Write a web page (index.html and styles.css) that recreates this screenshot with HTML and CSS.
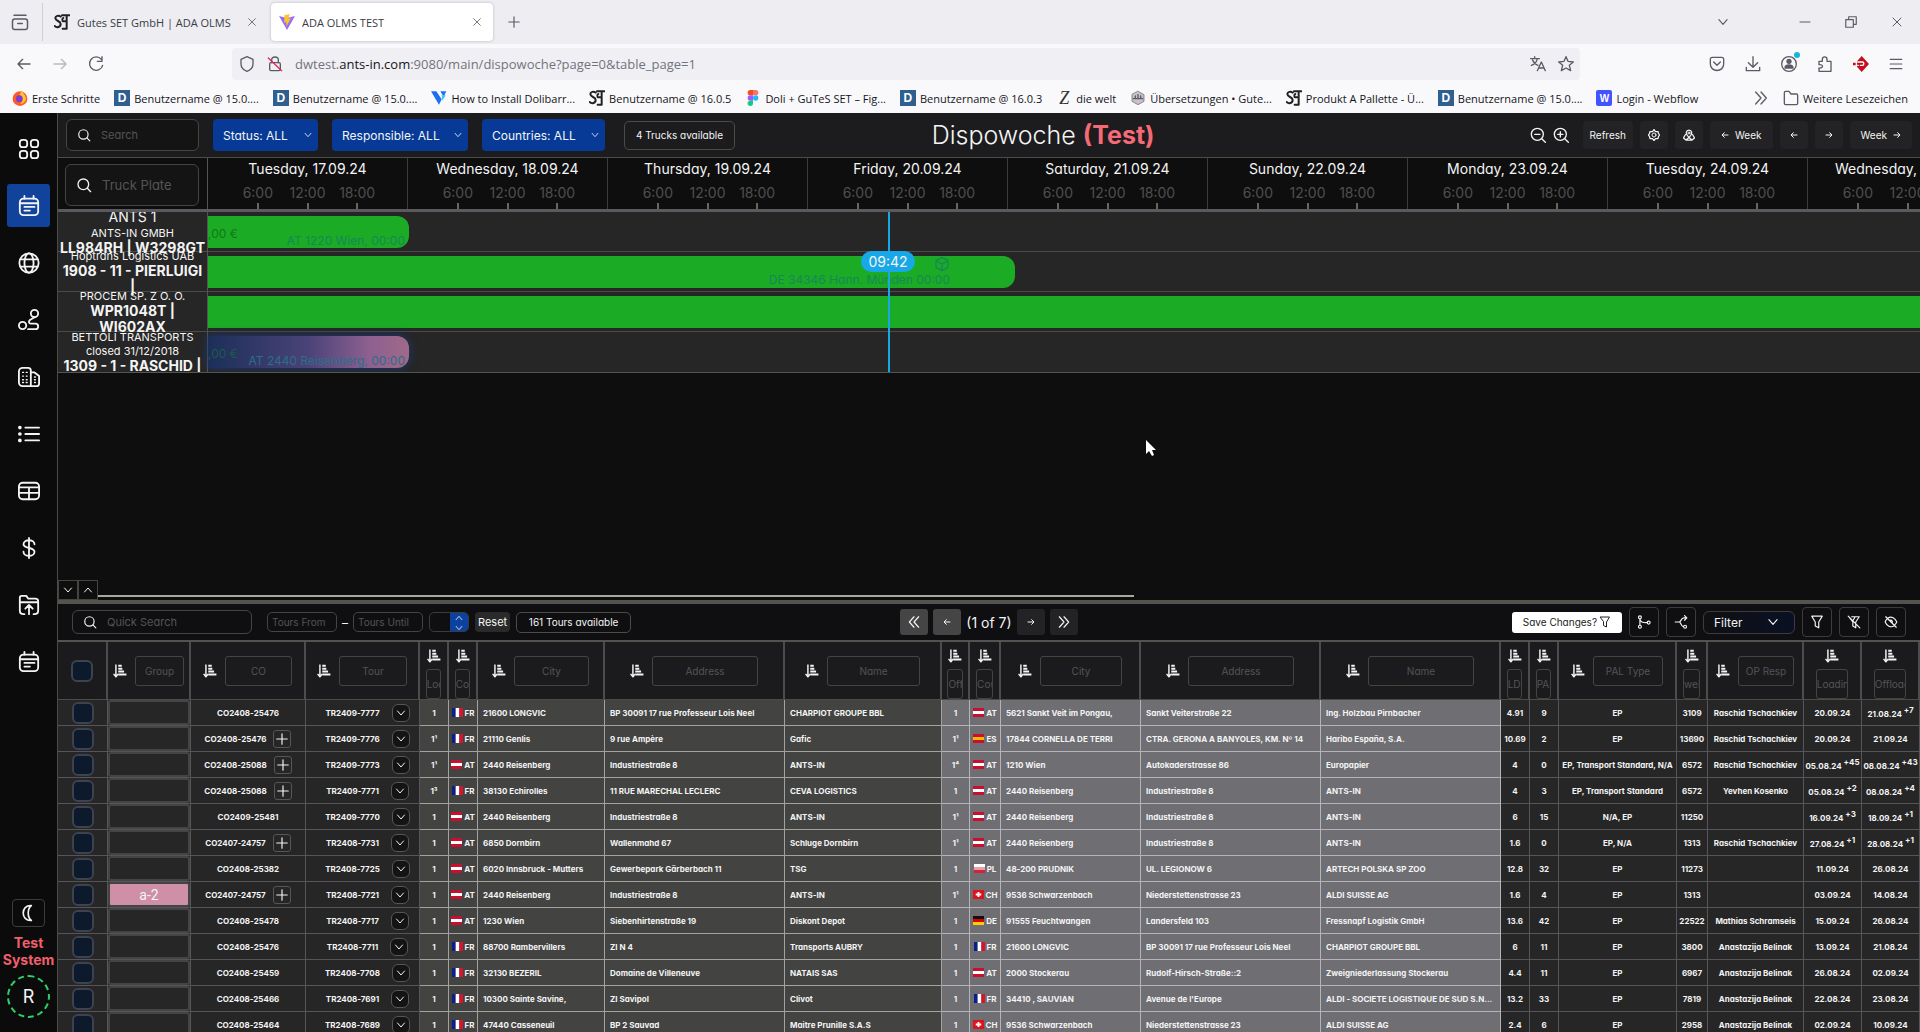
FILE: index.html
```html
<!DOCTYPE html>
<html lang="de">
<head>
<meta charset="utf-8">
<title>ADA OLMS TEST</title>
<link rel="stylesheet" href="styles.css">
</head>
<body>
<svg class="sprite" aria-hidden="true">
  <symbol id="i-search" viewBox="0 0 24 24"><circle cx="11" cy="11" r="8"/><path d="M17 17l5 5"/></symbol>
  <symbol id="i-zoomout" viewBox="0 0 24 24"><circle cx="11" cy="11" r="9"/><path d="M18 18l5 5M7 11h8"/></symbol>
  <symbol id="i-zoomin" viewBox="0 0 24 24"><circle cx="11" cy="11" r="9"/><path d="M18 18l5 5M7 11h8M11 7v8"/></symbol>
  <symbol id="i-down" viewBox="0 0 24 24"><path d="M5 8l7 8 7-8"/></symbol>
  <symbol id="i-up" viewBox="0 0 24 24"><path d="M5 16l7-8 7 8"/></symbol>
  <symbol id="i-left" viewBox="0 0 24 24"><path d="M21 12H4M10 5l-7 7 7 7"/></symbol>
  <symbol id="i-right" viewBox="0 0 24 24"><path d="M3 12h17M14 5l7 7-7 7"/></symbol>
  <symbol id="i-first" viewBox="0 0 24 24"><path d="M12 3l-8 9 8 9M20 3l-8 9 8 9"/></symbol>
  <symbol id="i-last" viewBox="0 0 24 24"><path d="M4 3l8 9-8 9M12 3l8 9-8 9"/></symbol>
  <symbol id="i-plus" viewBox="0 0 24 24"><path d="M12 3v18M3 12h18"/></symbol>
  <symbol id="i-close" viewBox="0 0 24 24"><path d="M4 4l16 16M20 4L4 20"/></symbol>
  <symbol id="i-grid" viewBox="0 0 24 24"><rect x="2" y="2" width="8" height="8" rx="3"/><rect x="14" y="2" width="8" height="8" rx="3"/><rect x="2" y="14" width="8" height="8" rx="3"/><rect x="14" y="14" width="8" height="8" rx="3"/></symbol>
  <symbol id="i-cal" viewBox="0 0 24 24"><rect x="2" y="4" width="20" height="18" rx="4"/><path d="M2 9h20M7 1v3M17 1v3M7 13h11M7 17h6"/></symbol>
  <symbol id="i-globe" viewBox="0 0 24 24"><circle cx="12" cy="12" r="10.500"/><ellipse cx="12" cy="12" rx="5" ry="10.500"/><path d="M3 8h18M3 16h18"/></symbol>
  <symbol id="i-route" viewBox="0 0 24 24"><circle cx="18" cy="5" r="4"/><circle cx="5" cy="18" r="4"/><path d="M18 9l-5 3c-2 2-1 4 1 4h5c4 0 4 6 0 6H11"/></symbol>
  <symbol id="i-building" viewBox="0 0 24 24"><path d="M14 22H5a4 4 0 0 1-4-4V6a4 4 0 0 1 4-4h6a3 3 0 0 1 3 3zM14 7h4l5 4v8a3 3 0 0 1-3 3h-6"/><path stroke-width="1.500" d="M5 7h1M9 7h1M5 11h1M9 11h1M5 15h1M9 15h1M5 18h1M9 18h1M18 12h1M18 15h1M18 18h1"/></symbol>
  <symbol id="i-list" viewBox="0 0 24 24"><path d="M8 5h15M8 12h15M8 19h15"/><path stroke-width="4" d="M2 5h.1M2 12h.1M2 19h.1"/></symbol>
  <symbol id="i-table" viewBox="0 0 24 24"><rect x="1" y="3" width="22" height="18" rx="4"/><path d="M1 8h22M1 14h22M12 8v13"/></symbol>
  <symbol id="i-dollar" viewBox="0 0 24 24"><path d="M12 1v22M18 8c0-6-12-6-12 0 0 5 12 3 12 8 0 6-12 6-12 0"/></symbol>
  <symbol id="i-folderup" viewBox="0 0 24 24"><path d="M7 22H6c-3 0-4-1-4-4V4c0-2 1-2 2-2h5l2 3h8c2 0 3 1 3 3v10c0 3-2 4-4 4h-1M2 9h20M12 22V13M8 16l4-4 4 4"/></symbol>
  <symbol id="i-moon" viewBox="0 0 24 24"><path d="M16 3C3 2 3 22 16 21c-5-4-5-14 0-18z"/></symbol>
  <symbol id="i-gear" viewBox="0 0 24 24"><path stroke-width="2.500" d="M12 1l3 4h5l1 4 2 3-2 3-1 4h-5l-3 4-3-4H4l-1-4-2-3 2-3 1-4h5z"/><circle cx="12" cy="12" r="4"/></symbol>
  <symbol id="i-mappin" viewBox="0 0 24 24"><path stroke-width="2.500" d="M12 17c-9-9-5-15 0-15s9 6 0 15zM5 11l-4 7 5 4h12l5-4-4-7M6 22l6-5 6 5"/><circle cx="12" cy="8" r="2"/></symbol>
  <symbol id="i-funnel" viewBox="0 0 24 24"><path d="M3 2h18l-6 10v10l-6-3v-7z"/></symbol>
  <symbol id="i-funneloff" viewBox="0 0 24 24"><path d="M8 3h13l-6 9v10l-5-3v-7L3 3M2 2l20 20M14 3l-4 7"/></symbol>
  <symbol id="i-eyeoff" viewBox="0 0 24 24"><path d="M7 5c6-4 12 1 15 7-1 2-2 4-4 5M5 7c-2 2-3 4-3 5 3 7 9 10 15 7M3 3l18 18M10 9c4-1 5 2 4 5"/></symbol>
  <symbol id="i-merge" viewBox="0 0 24 24"><circle cx="5" cy="4" r="2.500"/><circle cx="5" cy="20" r="2.500"/><circle cx="20" cy="13" r="2.500"/><path d="M5 7v10M5 7c1 5 4 6 12 6"/></symbol>
  <symbol id="i-split" viewBox="0 0 24 24"><circle cx="19" cy="20" r="2.500"/><path d="M2 12h7c3 0 3-7 8-7h4M18 1l4 4-4 4M9 12c3 0 3 8 7 8"/></symbol>
  <symbol id="i-sort" viewBox="0 0 24 24"><g stroke-linecap="butt"><path stroke-width="2.500" d="M5 1v20M1 17l4 5 4-5"/><path stroke-width="3.500" d="M9 3h6M9 8h7M9 13h10M9 18h14"/></g></symbol>
  <symbol id="i-box" viewBox="0 0 24 24"><path d="M12 2l9 5v10l-9 5-9-5V7zM3 7l9 5 9-5M12 12v10"/></symbol>
  <symbol id="i-archive" viewBox="0 0 24 24"><rect x="2" y="8" width="20" height="14" rx="3"/><path d="M4 3h16M9 14h6"/></symbol>
  <symbol id="i-reload" viewBox="0 0 24 24"><path d="M20 5a10 10 0 1 0 2 9M21 1v7h-7"/></symbol>
  <symbol id="i-shield" viewBox="0 0 24 24"><path d="M12 1l9 4v7c0 5-4 9-9 11-5-2-9-6-9-11V5z"/></symbol>
  <symbol id="i-lockoff" viewBox="0 0 24 24"><rect x="4" y="10" width="16" height="12" rx="2"/><path d="M7 10V6c0-6 10-6 10 0v4"/><path stroke="#e22850" d="M2 3l20 19"/></symbol>
  <symbol id="i-translate" viewBox="0 0 24 24"><path d="M1 4h13M7 1v3M11 4c-1 5-5 9-9 10M4 6c1 3 5 7 8 8M11 22l6-13 6 13M13 18h8"/></symbol>
  <symbol id="i-star" viewBox="0 0 24 24"><path d="M12 1l3 7 8 1-6 5 2 8-7-4-7 4 2-8-6-5 8-1z"/></symbol>
  <symbol id="i-pocket" viewBox="0 0 24 24"><path d="M2 5c0-2 1-3 3-3h14c2 0 3 1 3 3v7c0 13-20 13-20 0zM7 9l5 5 5-5"/></symbol>
  <symbol id="i-download" viewBox="0 0 24 24"><path d="M12 1v15M5 10l7 7 7-7M2 17v5h20v-5"/></symbol>
  <symbol id="i-user" viewBox="0 0 24 24"><circle cx="12" cy="12" r="11"/><circle cx="12" cy="8" r="3" fill="currentColor"/><path fill="currentColor" d="M6 18c0-6 12-6 12 0z"/></symbol>
  <symbol id="i-puzzle" viewBox="0 0 24 24"><path d="M3 8h5V5c0-5 7-5 7 0v3h6v15H3v-5c7 1 7-6 0-5z"/></symbol>
  <symbol id="i-menu" viewBox="0 0 24 24"><path d="M2 4h20M2 12h20M2 20h20"/></symbol>
  <symbol id="i-folder" viewBox="0 0 24 24"><path d="M2 20V4c0-1 1-2 2-2h5l3 4h8c1 0 2 1 2 2v12c0 1-1 2-2 2H4c-1 0-2-1-2-2z"/></symbol>
  <symbol id="i-restore" viewBox="0 0 24 24"><path d="M3 8h13v13H3zM8 8V3h13v13h-5"/></symbol>
  <symbol id="i-min" viewBox="0 0 24 24"><path d="M2 12h20"/></symbol>
  <symbol id="i-set" viewBox="0 0 24 24"><path stroke-width="3" d="M10 4c-3-3-8-1-8 2 0 5 8 4 8 9 0 5-6 6-9 3M12 2h11M19 2v20h-6M19 11h-5c-2 0-2-5 0-5"/></symbol>
  <symbol id="i-vite" viewBox="0 0 24 24"><path stroke="none" fill="#9a6cf0" d="M0 3l12 21L24 3 12 6z"/><path stroke="none" fill="#fcc42c" d="M16 0L8 2v11l3-1v7l7-13-4 1z"/></symbol>
  <symbol id="i-fox" viewBox="0 0 24 24"><circle cx="12" cy="13" r="11" stroke="none" fill="#ff5a2a"/><path stroke="none" fill="#ffc52e" d="M15 0c0 5 5 6 6 13-1 6-6 8-9 8 6-4 4-12-1-13z"/><circle cx="11" cy="13" r="5" stroke="none" fill="#7a40d0"/></symbol>
  <symbol id="i-vultr" viewBox="0 0 24 24"><path stroke="none" fill="#1d6ff2" d="M0 2h8l8 12-4 8zM14 2h9l-4 8z"/><path stroke="none" fill="#3cc6f0" d="M16 8l6 0-5 8z"/></symbol>
  <symbol id="i-figma" viewBox="0 0 24 24"><g stroke="none"><path fill="#f24e1e" d="M12 0H8a4 4 0 0 0 0 8h4z"/><path fill="#ff7262" d="M12 0h4a4 4 0 0 1 0 8h-4z"/><path fill="#a259ff" d="M12 8H8a4 4 0 0 0 0 8h4z"/><circle fill="#1abcfe" cx="16" cy="12" r="4"/><path fill="#0acf83" d="M12 16H8a4 4 0 1 0 4 4z"/></g></symbol>
  <symbol id="i-hex" viewBox="0 0 24 24"><path fill="#c9c0c8" stroke-width="1" d="M12 2l9 5v10l-9 5-9-5V7z"/><path d="M5 13h14M8 9v4M12 7v6M16 9v4"/></symbol>
  <symbol id="i-ext" viewBox="0 0 24 24"><path stroke="none" fill="#c4101c" d="M13 0l11 12-11 12-7-8V8zM0 10h4v4H0z"/><path stroke="#fff" d="M7 9h7c3 0 3 5 0 5h-3M7 14h1"/></symbol>
</svg>

<div class="window">
  <header class="browser">
    <div class="tabs">
      <svg class="ic s18 archive"><use href="#i-archive"/></svg>
      <div class="tab"><svg class="ic s16 dark"><use href="#i-set"/></svg><span>Gutes SET GmbH | ADA OLMS</span><button aria-label="Tab schließen"><svg class="ic s10"><use href="#i-close"/></svg></button></div>
      <div class="tab active"><svg class="ic s16"><use href="#i-vite"/></svg><span>ADA OLMS TEST</span><button aria-label="Tab schließen"><svg class="ic s10"><use href="#i-close"/></svg></button></div>
      <button class="newtab" aria-label="Neuer Tab"><svg class="ic s14"><use href="#i-plus"/></svg></button>
      <div class="winctl">
        <svg class="ic s14 alltabs"><use href="#i-down"/></svg>
        <button aria-label="Minimieren"><svg class="ic s12"><use href="#i-min"/></svg></button>
        <button aria-label="Wiederherstellen"><svg class="ic s14"><use href="#i-restore"/></svg></button>
        <button aria-label="Schließen"><svg class="ic s12"><use href="#i-close"/></svg></button>
      </div>
    </div>
    <div class="navbar">
      <div class="navbtns">
        <button aria-label="Zurück"><svg class="ic s16"><use href="#i-left"/></svg></button>
        <button aria-label="Vor" class="dim"><svg class="ic s16"><use href="#i-right"/></svg></button>
        <button aria-label="Neu laden"><svg class="ic s16"><use href="#i-reload"/></svg></button>
      </div>
      <div class="url">
        <svg class="ic s16"><use href="#i-shield"/></svg>
        <svg class="ic s16"><use href="#i-lockoff"/></svg>
        <span class="addr">dwtest.<b>ants-in.com</b>:9080/main/dispowoche?page=0&amp;table_page=1</span>
        <svg class="ic s16"><use href="#i-translate"/></svg>
        <svg class="ic s16"><use href="#i-star"/></svg>
      </div>
      <div class="exts">
        <svg class="ic s16"><use href="#i-pocket"/></svg>
        <svg class="ic s16"><use href="#i-download"/></svg>
        <span class="account"><svg class="ic s16"><use href="#i-user"/></svg></span>
        <svg class="ic s16"><use href="#i-puzzle"/></svg>
        <svg class="ic s16"><use href="#i-ext"/></svg>
        <svg class="ic s14"><use href="#i-menu"/></svg>
      </div>
    </div>
    <nav class="marks" id="marks"></nav>
  </header>

  <div class="app">
    <aside class="side">
      <nav class="sidenav" id="sidenav"></nav>
      <div class="sidefoot">
        <button class="moon" aria-label="Dark mode"><svg class="ic s20"><use href="#i-moon"/></svg></button>
        <strong>Test<br>System</strong>
        <a class="avatar" href="#">R</a>
      </div>
    </aside>

    <main class="main">
      <div class="topbar">
        <div class="filters">
          <label class="field search"><svg class="ic s14"><use href="#i-search"/></svg><input placeholder="Search" aria-label="Search"></label>
          <label class="blue status"><select aria-label="Status"><option>Status: ALL</option></select><svg class="ic s10"><use href="#i-down"/></svg></label>
          <label class="blue resp"><select aria-label="Responsible"><option>Responsible: ALL</option></select><svg class="ic s10"><use href="#i-down"/></svg></label>
          <label class="blue countries"><select aria-label="Countries"><option>Countries: ALL</option></select><svg class="ic s10"><use href="#i-down"/></svg></label>
          <span class="pill trucks">4 Trucks available</span>
        </div>
        <h1>Dispowoche <b>(Test)</b></h1>
        <div class="actions">
          <button class="bare" aria-label="Zoom out"><svg class="ic s16"><use href="#i-zoomout"/></svg></button>
          <button class="bare" aria-label="Zoom in"><svg class="ic s16"><use href="#i-zoomin"/></svg></button>
          <button class="act">Refresh</button>
          <button class="act sq" aria-label="Settings"><svg class="ic s12"><use href="#i-gear"/></svg></button>
          <button class="act sq" aria-label="Map"><svg class="ic s12"><use href="#i-mappin"/></svg></button>
          <button class="act week"><svg class="ic s8"><use href="#i-left"/></svg>Week</button>
          <button class="act sq" aria-label="Previous day"><svg class="ic s8"><use href="#i-left"/></svg></button>
          <button class="act sq" aria-label="Next day"><svg class="ic s8"><use href="#i-right"/></svg></button>
          <button class="act week">Week<svg class="ic s8"><use href="#i-right"/></svg></button>
        </div>
      </div>

      <section class="plan">
        <div class="planhead">
          <div class="plate"><label class="field"><svg class="ic s16"><use href="#i-search"/></svg><input placeholder="Truck Plate" aria-label="Truck Plate"></label></div>
          <div class="days" id="days"></div>
        </div>
        <div class="planbody">
          <div class="trucks-col">
            <div class="truck"><span class="mid">ANTS 1</span><span>ANTS-IN GMBH</span><b>LL984RH | W3298GT</b></div>
            <div class="truck"><span>Hoptrans Logistics UAB</span><b>1908 - 11 - PIERLUIGI<br>|</b></div>
            <div class="truck"><span>PROCEM SP. Z O. O.</span><b>WPR1048T |<br>WI602AX</b></div>
            <div class="truck"><span>BETTOLI TRANSPORTS<br>closed 31/12/2018</span><b>1309 - 1 - RASCHID |</b></div>
          </div>
          <div class="lanes">
            <div class="lane"><div class="bar day"><span class="price">,00 €</span><span class="dest">AT 1220 Wien, 00:00</span></div></div>
            <div class="lane"><div class="bar mid4"><svg class="ic s16"><use href="#i-box"/></svg><span class="dest">DE 34346 Hann. Münden 00:00</span></div></div>
            <div class="lane"><div class="bar full"></div></div>
            <div class="lane"><div class="bar day grad"><span class="price">,00 €</span><span class="dest">AT 2440 Reisenberg, 00:00</span></div></div>
            <div class="now"><time>09:42</time></div>
          </div>
        </div>
        <div class="planfoot">
          <button aria-label="Collapse"><svg class="ic s12"><use href="#i-down"/></svg></button>
          <button aria-label="Expand"><svg class="ic s12"><use href="#i-up"/></svg></button>
          <div class="scroll"></div>
        </div>
      </section>

      <section class="tours">
        <div class="toolbar">
          <div class="group">
            <label class="field quick"><svg class="ic s14"><use href="#i-search"/></svg><input placeholder="Quick Search" aria-label="Quick Search"></label>
            <div class="range"><input placeholder="Tours From" aria-label="Tours From"><span>–</span><input placeholder="Tours Until" aria-label="Tours Until"></div>
            <div class="spin"><input aria-label="Days"><span><svg class="ic s10"><use href="#i-up"/></svg><svg class="ic s10"><use href="#i-down"/></svg></span></div>
            <button class="reset">Reset</button>
            <span class="pill avail">161 Tours available</span>
          </div>
          <div class="pager">
            <button class="off" aria-label="First page"><svg class="ic s14"><use href="#i-first"/></svg></button>
            <button class="off" aria-label="Previous page"><svg class="ic s8"><use href="#i-left"/></svg></button>
            <span>(1 of 7)</span>
            <button aria-label="Next page"><svg class="ic s8"><use href="#i-right"/></svg></button>
            <button aria-label="Last page"><svg class="ic s14"><use href="#i-last"/></svg></button>
          </div>
          <div class="tools">
            <button class="save">Save Changes?<svg class="ic s12"><use href="#i-funnel"/></svg></button>
            <button class="tool" aria-label="Merge"><svg class="ic s14"><use href="#i-merge"/></svg></button>
            <button class="tool" aria-label="Split"><svg class="ic s14"><use href="#i-split"/></svg></button>
            <label class="filter"><select aria-label="Filter"><option>Filter</option></select><svg class="ic s14"><use href="#i-down"/></svg></label>
            <button class="tool" aria-label="Filter rows"><svg class="ic s14"><use href="#i-funnel"/></svg></button>
            <button class="tool" aria-label="Clear filter"><svg class="ic s14"><use href="#i-funneloff"/></svg></button>
            <button class="tool" aria-label="Hide columns"><svg class="ic s14"><use href="#i-eyeoff"/></svg></button>
          </div>
        </div>
        <div class="tablewrap">
          <table>
            <colgroup id="cols"></colgroup>
            <thead><tr id="heads"></tr></thead>
            <tbody id="rows"></tbody>
          </table>
        </div>
      </section>
    </main>
  </div>
</div>
<svg class="pointer" viewBox="0 0 12 18" aria-hidden="true"><path d="M1 1v14l3-3 3 5 2-1-2-5h4z" fill="#fff"/></svg>
<script src="app.js"></script>
</body>
</html>
```
FILE: styles.css
```css
* { box-sizing: border-box; }
body {
  margin: 0;
  background: #0e0e0f;
  color: #f4f4f4;
  font-family: Inter, "Liberation Sans", sans-serif;
  font-feature-settings: "cv11";
  font-size: 12px;
}
button, input, select { font: inherit; font-feature-settings: inherit; color: inherit; margin: 0; padding: 0; border: 0; background: none; min-width: 0; }
button { display: flex; align-items: center; justify-content: center; }
select { appearance: none; outline: none; }
input { outline: none; }
input::placeholder { color: #545454; opacity: 1; }
a { color: inherit; text-decoration: none; }
.sprite { position: absolute; width: 0; height: 0; }
.ic { flex: none; fill: none; stroke: currentColor; stroke-width: 2; stroke-linecap: round; stroke-linejoin: round; }
.s8 { width: 8px; height: 8px; stroke-width: 3; }
.s10 { width: 10px; height: 10px; }
.s12 { width: 12px; height: 12px; }
.s14 { width: 14px; height: 14px; }
.s16 { width: 16px; height: 16px; }
.s18 { width: 18px; height: 18px; }
.s20 { width: 20px; height: 20px; }
.s24 { width: 22px; height: 22px; }
.window { display: flex; flex-direction: column; height: 100vh; overflow: hidden; }

/* browser chrome */
.browser { flex: none; font-family: "Open Sans", "Noto Sans", sans-serif; font-size: 11px; color: #15141a; background: #f9f9fb; }
.browser .ic { color: #5b5b66; }
.browser .dark { color: #222; }
.tabs { display: flex; align-items: center; height: 44px; background: #ededf2; }
.archive { margin: 0 13px 0 11px; }
.tab { display: flex; align-items: center; gap: 7px; height: 38px; padding: 0 14px 0 11px; width: 229px; border-left: 1px solid #cfcfd8; color: #3b3b44; }
.tab span { flex: 1; white-space: nowrap; overflow: hidden; }
.tab.active { width: 222px; padding: 0 11px 0 8px; background: #fff; border: 0; border-radius: 4px; box-shadow: 0 0 3px #b4b4bc; }
.newtab { margin-left: 14px; }
.winctl { margin-left: auto; display: flex; align-items: center; gap: 33px; padding-right: 17px; }
.alltabs { margin-right: 36px; }
.navbar { display: flex; align-items: center; height: 39px; }
.navbtns { display: flex; gap: 20px; width: 232px; padding-left: 16px; }
.dim { opacity: .4; }
.url { flex: 1; display: flex; align-items: center; gap: 12px; height: 32px; padding: 0 6px 0 7px; background: #f0f0f4; border-radius: 4px; }
.addr { flex: 1; font-size: 13px; color: #73737c; }
.addr b { font-weight: 400; color: #15141a; }
.exts { display: flex; align-items: center; justify-content: flex-end; gap: 20px; width: 340px; padding-right: 17px; }
.account { position: relative; display: flex; }
.account::after { content: ""; position: absolute; top: -4px; right: -3px; width: 6px; height: 6px; border-radius: 50%; background: #18b4e0; }
.marks { display: flex; align-items: center; gap: 14px; height: 30px; padding: 0 12px; }
.marks a { display: flex; align-items: center; gap: 4px; white-space: nowrap; }
.marks .more { margin-left: auto; }
.fav { display: flex; align-items: center; justify-content: center; width: 16px; height: 16px; font: 700 12px "Liberation Sans", sans-serif; color: #fff; }
.fav.d { background: #2f5f8f; }
.fav.w { background: #4353ff; font-size: 10px; border-radius: 2px; }
.fav.z { color: #333; font: italic 18px "Liberation Serif", serif; }

/* sidebar */
.app { flex: 1; display: flex; min-height: 0; }
.side { flex: none; display: flex; flex-direction: column; justify-content: space-between; align-items: center; width: 58px; padding: 14px 0; background: #0b0b0c; border-right: 1px solid #4c4c46; }
.sidenav { display: flex; flex-direction: column; gap: 14px; }
.sidenav a { display: flex; align-items: center; justify-content: center; width: 43px; height: 43px; border-radius: 3px; }
.sidenav a.on { background: #12439c; }
.sidefoot { display: flex; flex-direction: column; align-items: center; gap: 7px; text-align: center; }
.sidefoot strong { color: #f0606c; font-size: 14px; line-height: 17px; }
.moon { width: 33px; height: 28px; border: 1px solid #3c3c3c; border-radius: 4px; }
.avatar { display: flex; align-items: center; justify-content: center; width: 43px; height: 43px; border: 2px dashed #2fd068; border-radius: 50%; font-size: 18px; }

/* top bar */
.main { flex: 1; min-width: 0; display: flex; flex-direction: column; }
.topbar { flex: none; display: grid; grid-template-columns: 8fr auto 7fr; align-items: center; height: 45px; padding: 0 8px; background: #1c1c1f; border-bottom: 1px solid #4c4c46; }
.filters { display: flex; align-items: center; gap: 14px; }
.field { display: flex; align-items: center; gap: 10px; height: 32px; padding: 0 10px; border: 1px solid #45453f; border-radius: 6px; background: #141415; }
.field input { flex: 1; width: 20px; }
.search { width: 133px; font-size: 11px; }
.blue { display: flex; align-items: center; height: 32px; padding: 0 5px 0 10px; background: #063a96; border-radius: 4px; }
.blue select { flex: 1; }
.status { width: 105px; }
.resp { width: 136px; }
.countries { width: 123px; }
.pill { display: flex; align-items: center; justify-content: center; border: 1px solid #4c4c46; border-radius: 5px; white-space: nowrap; }
.trucks { width: 111px; height: 29px; margin-left: 5px; font-size: 10px; }
h1 { margin: 0; font-size: 25px; font-weight: 300; white-space: nowrap; }
h1 b { color: #f56a76; font-weight: 700; }
.actions { display: flex; align-items: center; justify-content: flex-end; gap: 7px; }
.act { gap: 6px; height: 28px; padding: 0 7px; font-size: 10px; background: #232325; border-radius: 4px; }
.act.sq { width: 28px; padding: 0; }
.act.week { padding: 0 11px; }
.bare + .act { margin-left: 7px; }

/* planner */
.plan { flex: none; display: flex; flex-direction: column; height: 446px; border-bottom: 4px solid #53534f; background: #0e0e0f; }
.planhead { display: flex; height: 54px; border-bottom: 3px solid #5a5a5e; }
.plate { flex: none; width: 150px; padding: 6px 8px 2px 7px; border-right: 1px solid #55554f; }
.plate .field { height: 42px; font-size: 13px; }
.days { flex: 1; display: flex; overflow: hidden; }
.day-head { flex: none; width: 200px; border-right: 1px solid #3c3c3c; display: flex; flex-direction: column; justify-content: space-between; text-align: center; font-size: 14px; line-height: 22px; white-space: nowrap; }
.hours { display: flex; padding: 0 25px; color: #4e4e4e; }
.hours span { flex: 1; display: flex; flex-direction: column; align-items: center; line-height: 18px; }
.hours span::after { content: ""; width: 2px; height: 6px; margin-top: 1px; background: #66665f; }
.planbody { display: flex; overflow: hidden; background: #262626; border-bottom: 1px solid #55554f; }
.trucks-col { flex: none; width: 150px; border-right: 1px solid #55554f; }
.truck { display: flex; flex-direction: column; align-items: center; justify-content: center; height: 40px; text-align: center; font-size: 11px; line-height: 14px; white-space: nowrap; border-bottom: 1px solid #4c4c46; }
.truck b { font-size: 14px; line-height: 16px; }
.truck .mid { font-size: 14px; line-height: 18px; }
.truck:last-child, .lane:nth-child(4) { border-bottom: 0; }
.lanes { position: relative; flex: 1; min-width: 0; }
.lane { height: 40px; padding: 4px 0; border-bottom: 1px solid #4c4c46; }
.bar { position: relative; height: 32px; background: #1cab24; border-radius: 0 12px 12px 0; }
.bar.day { width: 201px; }
.bar.mid4 { width: 807px; padding: 0 65px 0 0; text-align: right; color: #17875a; }
.bar.mid4 .ic { display: block; margin-left: auto; }
.bar.full { border-radius: 0; }
.bar .price { position: absolute; left: 0; top: 10px; color: #127a18; }
.bar .dest { display: block; color: #17875a; line-height: 16px; text-align: right; }
.bar.day .dest { padding: 17px 4px 0 0; }
.bar.grad { background: linear-gradient(90deg, #1c2f58, #4a4378 50%, #8d6090 80%, #a06a88); box-shadow: 0 0 10px #1c3a78; }
.bar.grad .price { color: #1c5a4c; }
.bar.grad .dest { color: #2c6e8c; }
.now { position: absolute; left: 680px; top: 0; bottom: 0; width: 2px; background: #18a8e8; }
.now time { position: absolute; left: -27px; top: 39px; width: 54px; border-radius: 11px; background: #18a8e8; font-size: 14px; line-height: 21px; text-align: center; }
.planfoot { display: flex; align-items: flex-end; height: 20px; margin-top: auto; }
.planfoot button { width: 20px; height: 20px; border: 1px solid #45453f; }
.scroll { width: 1036px; height: 2px; margin-bottom: 3px; background: #a8a8a0; }

/* tours */
.tours { flex: 1; min-height: 0; display: flex; flex-direction: column; }
.toolbar { flex: none; display: grid; grid-template-columns: 1fr auto 1fr; align-items: center; height: 38px; padding: 0 14px; border-bottom: 2px solid #53534f; background: #0f0f11; }
.group { display: flex; align-items: center; gap: 6px; }
.quick { width: 180px; height: 24px; background: none; font-size: 11px; }
.range { display: flex; align-items: center; gap: 5px; margin-left: 9px; }
.range input { width: 70px; height: 20px; padding: 0 4px; border: 1px solid #45453f; border-radius: 5px; font-size: 10px; }
.spin { display: flex; width: 40px; height: 20px; border: 1px solid #3c3c3c; border-radius: 5px; overflow: hidden; }
.spin input { flex: 1; }
.spin span { display: flex; flex-direction: column; width: 18px; align-items: center; background: #0b419f; }
.reset { height: 20px; padding: 0 3px; font-size: 11px; background: #2a2a2a; border-radius: 4px; }
.avail { width: 115px; height: 21px; font-size: 10px; }
.pager { display: flex; align-items: center; gap: 5px; font-size: 14px; }
.pager button { width: 28px; height: 26px; border-radius: 3px; background: #232325; }
.pager .off { background: #454545; }
.tools { display: flex; align-items: center; justify-content: flex-end; gap: 7px; }
.save { gap: 2px; height: 21px; padding: 0 11px; font-size: 10px; background: #fff; color: #222; border-radius: 3px; }
.tool { width: 30px; height: 30px; border: 1px solid #3c3c3c; border-radius: 4px; }
.filter { display: flex; align-items: center; width: 92px; height: 23px; padding: 0 14px 0 10px; border: 1px solid #3c3c3c; border-radius: 6px; background: linear-gradient(90deg, #101012, #0a1024); }
.filter select { flex: 1; }
.tablewrap { flex: 1; min-height: 0; overflow: hidden; }
table { width: 100%; table-layout: fixed; border-collapse: separate; border-spacing: 0; font-size: 8px; font-weight: 700; line-height: 12px; }
th { height: 58px; padding: 0; background: #1b1b1e; border-right: 2px solid #4c4c4c; border-bottom: 1px solid #4c4c46; font-weight: 400; }
td { height: 26px; padding: 0; background: #262626; border-right: 1px solid #55555a; border-bottom: 1px solid #55555a; text-align: center; white-space: nowrap; overflow: hidden; }
th > div { display: flex; align-items: center; justify-content: center; gap: 8px; }
th .text { width: 60%; height: 30px; border: 1px solid #45453f; border-radius: 3px; font-size: 10px; text-align: center; }
th .narrow { flex-direction: column; gap: 6px; padding-top: 6px; }
th .narrow .text { text-align: left; width: 58%; }
td.load { background: #434342; border-color: #a2a2a0; }
td.unload { background: #6e6e73; border-color: #b4b4b8; }
td.l { padding-left: 5px; text-align: left; }
td > div { display: flex; align-items: center; justify-content: center; gap: 7px; }
td .cc { gap: 2px; }
td .tr { gap: 12px; padding-left: 10px; }
td sup { font-size: 8px; line-height: 8px; }
td button { width: 18px; height: 18px; border: 1px solid #55555a; border-radius: 3px; }
.tr button { border-radius: 6px; background: #141415; }
input[type=checkbox] { appearance: none; display: block; width: 22px; height: 22px; margin: 0 auto; border: 2px solid #3c4250; border-radius: 6px; background: #0d1a2c; }
td .grp { display: block; width: 100%; height: 25px; border: 2px solid #444444; border-radius: 3px; text-align: center; font: 400 14px Roboto, sans-serif; }
.grp.pink { background: #cf8fa6; }
.flag { width: 11px; height: 9px; }
.pointer { position: absolute; left: 1145px; top: 439px; width: 12px; height: 18px; }
```
FILE: app.js
```js
const icon = (name, size) => `<svg class="ic ${size}"><use href="#i-${name}"/></svg>`;

const fav = {
  D: '<span class="fav d">D</span>', W: '<span class="fav w">W</span>', Z: '<span class="fav z">Z</span>',
  fox: icon('fox', 's16'), set: icon('set', 's16 dark'), vultr: icon('vultr', 's16'),
  figma: icon('figma', 's16'), hex: icon('hex', 's16')
};
const marks = [
  ['fox', 'Erste Schritte'], ['D', 'Benutzername @ 15.0....'], ['D', 'Benutzername @ 15.0....'],
  ['vultr', 'How to Install Dolibarr...'], ['set', 'Benutzername @ 16.0.5'], ['figma', 'Doli + GuTeS SET – Fig...'],
  ['D', 'Benutzername @ 16.0.3'], ['Z', 'die welt'], ['hex', 'Übersetzungen • Gute...'],
  ['set', 'Produkt A Pallette - Ü...'], ['D', 'Benutzername @ 15.0....'], ['W', 'Login - Webflow']
];
document.getElementById('marks').innerHTML =
  marks.map(([f, t]) => `<a href="#">${fav[f]}<span>${t}</span></a>`).join('') +
  `<a href="#" class="more" aria-label="Mehr">${icon('last', 's16')}</a><a href="#">${icon('folder', 's16')}<span>Weitere Lesezeichen</span></a>`;

document.getElementById('sidenav').innerHTML =
  ['grid', 'cal', 'globe', 'route', 'building', 'list', 'table', 'dollar', 'folderup', 'cal']
    .map((n, i) => `<a href="#" aria-label="${n}"${i === 1 ? ' class="on"' : ''}>${icon(n, 's24')}</a>`).join('');

document.getElementById('days').innerHTML =
  ['Tuesday, 17', 'Wednesday, 18', 'Thursday, 19', 'Friday, 20', 'Saturday, 21', 'Sunday, 22', 'Monday, 23', 'Tuesday, 24', 'Wednesday, 25']
    .map(d => `<div class="day-head">${d}.09.24<div class="hours"><span>6:00</span><span>12:00</span><span>18:00</span></div></div>`).join('');

// column: width, label, stacked header
const cols = [
  [50, ''], [83, 'Group'], [115, 'CO'], [114, 'Tour'], [29, 'Loading', 1], [29, 'Country', 1],
  [127, 'City'], [180, 'Address'], [157, 'Name'], [28, 'Offloading', 1], [31, 'Country', 1],
  [140, 'City'], [180, 'Address'], [180, 'Name'], [29, 'LDM', 1], [29, 'PAL', 1],
  [118, 'PAL Type'], [31, 'weight', 1], [96, 'OP Resp'], [58, 'Loading', 1], [58, 'Offloading', 1]
];
document.getElementById('cols').innerHTML = cols.map(c => `<col style="width:${c[0]}px">`).join('');
document.getElementById('heads').innerHTML = cols.map(([, t, narrow]) => t
  ? `<th><div${narrow ? ' class="narrow"' : ''}>${icon('sort', 's14')}<input class="text" placeholder="${t}" aria-label="${t}"></div></th>`
  : '<th><input type="checkbox" aria-label="Select all"></th>').join('');

const bands = {
  FR: ['v', '#0b1f8c', '#fff', '#d8142c'], AT: ['h', '#c8102e', '#fff', '#c8102e'], ES: ['h', '#c8102e', '#f5b800', '#c8102e'],
  DE: ['h', '#111', '#d00', '#fc0'], PL: ['h', '#fff', '#e8a0a8', '#d4213d'], CH: ['h', '#e0101c', '#e0101c', '#e0101c']
};
const flag = c => {
  const [dir, ...fill] = bands[c];
  const parts = fill.map((f, i) => dir === 'v'
    ? `<rect x="${i * 4}" width="4" height="9" fill="${f}"/>`
    : `<rect y="${i * 3}" width="12" height="3" fill="${f}"/>`).join('');
  return `<svg class="flag" viewBox="0 0 12 9" preserveAspectRatio="none">${parts}${c === 'CH' ? '<path d="M6 2v5M3 4.500h6" stroke="#fff" stroke-width="2"/>' : ''}</svg>`;
};

// group | CO | plus | tour | load nr, country, city, address, name | unload ... | ldm | pal | type | weight | resp | dates
const rows = `|CO2408-25476||TR2409-7777|1|FR|21600 LONGVIC|BP 30091 17 rue Professeur Lois Neel|CHARPIOT GROUPE BBL|1|AT|5621 Sankt Veit im Pongau,|Sankt Veiterstraße 22|Ing. Holzbau Pirnbacher|4.91|9|EP|3109|Raschid Tschachkiev|20.09.24|21.08.24 +7
|CO2408-25476|+|TR2409-7776|1¹|FR|21110 Genlis|9 rue Ampère|Gafic|1¹|ES|17844 CORNELLA DE TERRI|CTRA. GERONA A BANYOLES, KM. Nº 14|Haribo España, S.A.|10.69|2|EP|13690|Raschid Tschachkiev|20.09.24|21.09.24
|CO2408-25088|+|TR2409-7773|1¹|AT|2440 Reisenberg|Industriestraße 8|ANTS-IN|1⁴|AT|1210 Wien|Autokaderstrasse 86|Europapier|4|0|EP, Transport Standard, N/A|6572|Raschid Tschachkiev|05.08.24 +45|08.08.24 +43
|CO2408-25088|+|TR2409-7771|1³|FR|38130 Echirolles|11 RUE MARECHAL LECLERC|CEVA LOGISTICS|1|AT|2440 Reisenberg|Industriestraße 8|ANTS-IN|4|3|EP, Transport Standard|6572|Yevhen Kosenko|05.08.24 +2|08.08.24 +4
|CO2409-25481||TR2409-7770|1|AT|2440 Reisenberg|Industriestraße 8|ANTS-IN|1¹|AT|2440 Reisenberg|Industriestraße 8|ANTS-IN|6|15|N/A, EP|11250||16.09.24 +3|18.09.24 +1
|CO2407-24757|+|TR2408-7731|1|AT|6850 Dornbirn|Wallenmahd 67|Schluge Dornbirn|1¹|AT|2440 Reisenberg|Industriestraße 8|ANTS-IN|1.6|0|EP, N/A|1313|Raschid Tschachkiev|27.08.24 +1|28.08.24 +1
|CO2408-25382||TR2408-7725|1|AT|6020 Innsbruck - Mutters|Gewerbepark Gärberbach 11|TSG|1|PL|48-200 PRUDNIK|UL. LEGIONOW 6|ARTECH POLSKA SP ZOO|12.8|32|EP|11273||11.09.24|26.08.24
a-2|CO2407-24757|+|TR2408-7721|1|AT|2440 Reisenberg|Industriestraße 8|ANTS-IN|1¹|CH|9536 Schwarzenbach|Niederstettenstrasse 23|ALDI SUISSE AG|1.6|4|EP|1313||03.09.24|14.08.24
|CO2408-25478||TR2408-7717|1|AT|1230 Wien|Siebenhirtenstraße 19|Diskont Depot|1|DE|91555 Feuchtwangen|Landersfeld 103|Fressnapf Logistik GmbH|13.6|42|EP|22522|Mathias Schramseis|15.09.24|26.08.24
|CO2408-25476||TR2408-7711|1|FR|88700 Rambervillers|ZI N 4|Transports AUBRY|1|FR|21600 LONGVIC|BP 30091 17 rue Professeur Lois Neel|CHARPIOT GROUPE BBL|6|11|EP|3800|Anastazija Belinak|13.09.24|21.08.24
|CO2408-25459||TR2408-7708|1|FR|32130 BEZERIL|Domaine de Villeneuve|NATAIS SAS|1|AT|2000 Stockerau|Rudolf-Hirsch-Straße::2|Zweigniederlassung Stockerau|4.4|11|EP|6967|Anastazija Belinak|26.08.24|02.09.24
|CO2408-25466||TR2408-7691|1|FR|10300 Sainte Savine,|ZI Savipol|Clivot|1|FR|34410 , SAUVIAN|Avenue de l'Europe|ALDI - SOCIETE LOGISTIQUE DE SUD S.N...|13.2|33|EP|7819|Anastazija Belinak|22.08.24|23.08.24
|CO2408-25464||TR2408-7689|1|FR|47440 Casseneuil|BP 2 Sauvad|Maitre Prunille S.A.S|1|CH|9536 Schwarzenbach|Niederstettenstrasse 23|ALDI SUISSE AG|2.4|6|EP|2958|Anastazija Belinak|02.09.24|10.09.24`;

document.getElementById('rows').innerHTML = rows.split('\n').map(line => {
  const [group, co, plus, tour, ...rest] = line.split('|');
  const cells = rest.map((v, i) => {
    const cls = [i < 5 ? 'load' : i < 10 ? 'unload' : '', [2, 3, 4, 7, 8, 9].includes(i) ? 'l' : ''].join(' ').trim();
    const body = i === 1 || i === 6 ? `<div class="cc">${flag(v)}${v}</div>` : v.replace(/ (\+\d+)$/, ' <sup>$1</sup>');
    return `<td${cls ? ` class="${cls}"` : ''}>${body}</td>`;
  }).join('');
  return `<tr><td><input type="checkbox" aria-label="Select ${tour}"></td>
    <td><input class="grp${group ? ' pink' : ''}" value="${group}" aria-label="Group"></td>
    <td><div>${co}${plus ? `<button aria-label="Add">${icon('plus', 's14')}</button>` : ''}</div></td>
    <td><div class="tr">${tour}<button aria-label="Details">${icon('down', 's12')}</button></div></td>${cells}</tr>`;
}).join('');
```
